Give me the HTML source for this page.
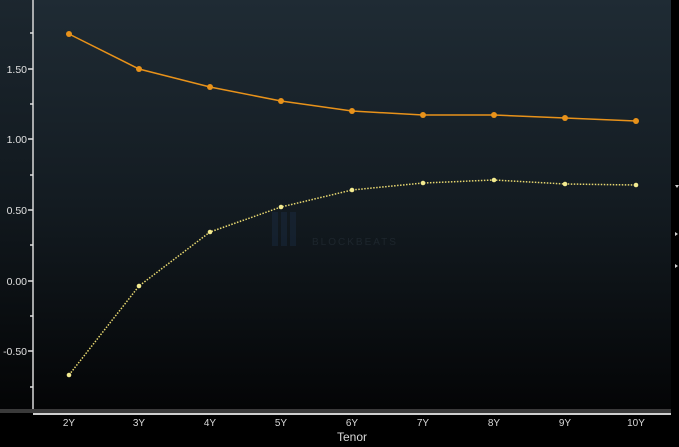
<!DOCTYPE html>
<html><head><style>
html,body{margin:0;padding:0;background:#000;}
body{width:679px;height:447px;overflow:hidden;position:relative;font-family:"Liberation Sans",sans-serif;}
</style></head><body>
<svg width="679" height="447" viewBox="0 0 679 447" xmlns="http://www.w3.org/2000/svg" style="position:absolute;left:0;top:0">
<defs>
<linearGradient id="bg" x1="0" y1="0" x2="0" y2="1">
<stop offset="0" stop-color="#1f2b34"/>
<stop offset="0.5" stop-color="#131b21"/>
<stop offset="1" stop-color="#040506"/>
</linearGradient>
</defs>
<rect x="0" y="0" width="679" height="447" fill="#000"/>
<rect x="33" y="0" width="638" height="409" fill="url(#bg)"/>
<rect x="0" y="0" width="33" height="409" fill="url(#bg)" opacity="0.9"/>
<g opacity="0.18">
<rect x="272" y="212" width="6" height="34" fill="#2a4a7a"/>
<rect x="281" y="212" width="6" height="34" fill="#2a4a7a"/>
<rect x="290" y="212" width="6" height="34" fill="#2a4a7a"/>
<text x="312" y="245" font-size="10" fill="#556677" letter-spacing="2">BLOCKBEATS</text>
</g>
<line x1="33" y1="0" x2="33" y2="409" stroke="#d8d8d8" stroke-width="1.5"/>
<g fill="#e0e0e0" font-size="10.5" text-anchor="end">
<text x="27" y="73">1.50</text>
<text x="27" y="143">1.00</text>
<text x="27" y="214">0.50</text>
<text x="27" y="285">0.00</text>
<text x="27" y="355">-0.50</text>
</g>
<g stroke="#e0e0e0" stroke-width="1.5">
<line x1="28" y1="69" x2="33" y2="69"/><line x1="28" y1="139" x2="33" y2="139"/>
<line x1="28" y1="210" x2="33" y2="210"/><line x1="28" y1="281" x2="33" y2="281"/>
<line x1="28" y1="351" x2="33" y2="351"/>
<line x1="30" y1="33" x2="33" y2="33"/><line x1="30" y1="104" x2="33" y2="104"/>
<line x1="30" y1="175" x2="33" y2="175"/><line x1="30" y1="245" x2="33" y2="245"/>
<line x1="30" y1="316" x2="33" y2="316"/><line x1="30" y1="387" x2="33" y2="387"/>
</g>
<rect x="0" y="409" width="671" height="4" fill="#3a3a3a"/>
<rect x="33" y="413" width="638" height="2" fill="#cfcfcf"/>
<g fill="#d8d8d8" font-size="10" text-anchor="middle">
<text x="69" y="426">2Y</text><text x="139" y="426">3Y</text><text x="210" y="426">4Y</text>
<text x="281" y="426">5Y</text><text x="352" y="426">6Y</text><text x="423" y="426">7Y</text>
<text x="494" y="426">8Y</text><text x="565" y="426">9Y</text><text x="636" y="426">10Y</text>
<text x="352" y="441" font-size="12">Tenor</text>
</g>
<polyline fill="none" stroke="#e8921a" stroke-width="1.5" points="69,34 139,69 210,87 281,101 352,111 423,115 494,115 565,118 636,121"/>
<g fill="#e8921a">
<circle cx="69" cy="34" r="3"/><circle cx="139" cy="69" r="3"/><circle cx="210" cy="87" r="3"/>
<circle cx="281" cy="101" r="3"/><circle cx="352" cy="111" r="3"/><circle cx="423" cy="115" r="3"/>
<circle cx="494" cy="115" r="3"/><circle cx="565" cy="118" r="3"/><circle cx="636" cy="121" r="3"/>
</g>
<polyline fill="none" stroke="#e8d870" stroke-width="1.5" stroke-dasharray="1.5,1.5" points="69,375 139,286 210,232 281,207 352,190 423,183 494,180 565,184 636,185"/>
<g fill="#f2ea90">
<circle cx="69" cy="375" r="2.3"/><circle cx="139" cy="286" r="2.3"/><circle cx="210" cy="232" r="2.3"/>
<circle cx="281" cy="207" r="2.3"/><circle cx="352" cy="190" r="2.3"/><circle cx="423" cy="183" r="2.3"/>
<circle cx="494" cy="180" r="2.3"/><circle cx="565" cy="184" r="2.3"/><circle cx="636" cy="185" r="2.3"/>
</g>
<g fill="#d0d0d0">
<polygon points="675,185 679,185 677,188"/>
<polygon points="675,232 678,234 675,236"/>
<polygon points="675,264 678,266 675,268"/>
</g>
</svg>
</body></html>
